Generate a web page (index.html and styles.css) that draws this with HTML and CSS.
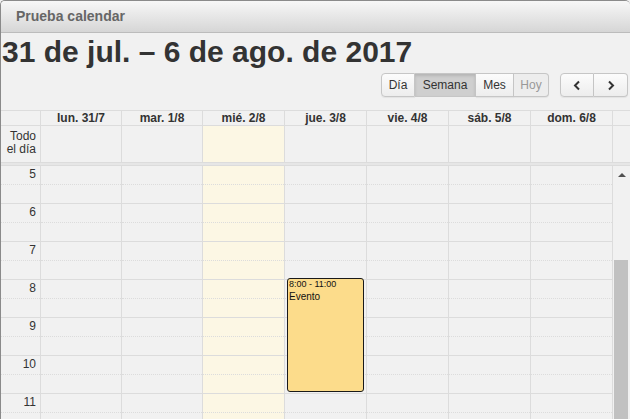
FILE: index.html
```html
<!DOCTYPE html>
<html lang="es">
<head>
<meta charset="utf-8">
<title>Prueba calendar</title>
<link rel="stylesheet" href="styles.css">
</head>
<body>
<div class="window">
  <div class="titlebar">Prueba calendar</div>
  <div class="cal">
    <h2 class="range">31 de jul. – 6 de ago. de 2017</h2>
    <div class="toolbar">
      <div class="btn-group">
        <button class="btn b-dia">Día</button>
        <button class="btn b-sem active">Semana</button>
        <button class="btn b-mes">Mes</button>
        <button class="btn b-hoy disabled">Hoy</button>
      </div>
      <div class="btn-group">
        <button class="btn b-nav"><svg width="8" height="11" viewBox="0 0 8 11"><polyline points="6,1.5 2,5.5 6,9.5" fill="none" stroke="#333" stroke-width="2"/></svg></button>
        <button class="btn b-nav"><svg width="8" height="11" viewBox="0 0 8 11"><polyline points="2,1.5 6,5.5 2,9.5" fill="none" stroke="#333" stroke-width="2"/></svg></button>
      </div>
    </div>

    <div class="row head">
      <div class="cell axis"></div>
      <div class="cell day">lun. 31/7</div>
      <div class="cell day">mar. 1/8</div>
      <div class="cell day">mié. 2/8</div>
      <div class="cell day">jue. 3/8</div>
      <div class="cell day">vie. 4/8</div>
      <div class="cell day">sáb. 5/8</div>
      <div class="cell day">dom. 6/8</div>
      <div class="cell gutter"></div>
    </div>

    <div class="row allday">
      <div class="cell axis"><span>Todo<br>el día</span></div>
      <div class="cell day"></div>
      <div class="cell day"></div>
      <div class="cell day today"></div>
      <div class="cell day"></div>
      <div class="cell day"></div>
      <div class="cell day"></div>
      <div class="cell day"></div>
      <div class="cell gutter"></div>
    </div>

    <div class="divider"></div>

    <div class="row body">
      <div class="col axis">
        <div class="slot"><span>5</span></div><div class="slot"></div>
        <div class="slot"><span>6</span></div><div class="slot"></div>
        <div class="slot"><span>7</span></div><div class="slot"></div>
        <div class="slot"><span>8</span></div><div class="slot"></div>
        <div class="slot"><span>9</span></div><div class="slot"></div>
        <div class="slot"><span>10</span></div><div class="slot"></div>
        <div class="slot"><span>11</span></div><div class="slot"></div>
      </div>
      <div class="col day"><div class="slot"></div><div class="slot"></div><div class="slot"></div><div class="slot"></div><div class="slot"></div><div class="slot"></div><div class="slot"></div><div class="slot"></div><div class="slot"></div><div class="slot"></div><div class="slot"></div><div class="slot"></div><div class="slot"></div><div class="slot"></div></div>
      <div class="col day"><div class="slot"></div><div class="slot"></div><div class="slot"></div><div class="slot"></div><div class="slot"></div><div class="slot"></div><div class="slot"></div><div class="slot"></div><div class="slot"></div><div class="slot"></div><div class="slot"></div><div class="slot"></div><div class="slot"></div><div class="slot"></div></div>
      <div class="col day today"><div class="slot"></div><div class="slot"></div><div class="slot"></div><div class="slot"></div><div class="slot"></div><div class="slot"></div><div class="slot"></div><div class="slot"></div><div class="slot"></div><div class="slot"></div><div class="slot"></div><div class="slot"></div><div class="slot"></div><div class="slot"></div></div>
      <div class="col day has-event"><div class="slot"></div><div class="slot"></div><div class="slot"></div><div class="slot"></div><div class="slot"></div><div class="slot"></div><div class="slot"></div><div class="slot"></div><div class="slot"></div><div class="slot"></div><div class="slot"></div><div class="slot"></div><div class="slot"></div><div class="slot"></div>
        <div class="event">
          <div class="ev-time">8:00 - 11:00</div>
          <div class="ev-title">Evento</div>
        </div>
      </div>
      <div class="col day"><div class="slot"></div><div class="slot"></div><div class="slot"></div><div class="slot"></div><div class="slot"></div><div class="slot"></div><div class="slot"></div><div class="slot"></div><div class="slot"></div><div class="slot"></div><div class="slot"></div><div class="slot"></div><div class="slot"></div><div class="slot"></div></div>
      <div class="col day"><div class="slot"></div><div class="slot"></div><div class="slot"></div><div class="slot"></div><div class="slot"></div><div class="slot"></div><div class="slot"></div><div class="slot"></div><div class="slot"></div><div class="slot"></div><div class="slot"></div><div class="slot"></div><div class="slot"></div><div class="slot"></div></div>
      <div class="col day"><div class="slot"></div><div class="slot"></div><div class="slot"></div><div class="slot"></div><div class="slot"></div><div class="slot"></div><div class="slot"></div><div class="slot"></div><div class="slot"></div><div class="slot"></div><div class="slot"></div><div class="slot"></div><div class="slot"></div><div class="slot"></div></div>
      <div class="col scroll">
        <div class="arrow"></div>
        <div class="thumb"></div>
      </div>
    </div>
  </div>
</div>
</body>
</html>
```
FILE: styles.css
```css
* { box-sizing: border-box; }
html, body { margin: 0; height: 100%; }
body {
  background: #f1f1f1;
  font-family: "Liberation Sans", Arial, sans-serif;
  color: #333;
  overflow: hidden;
}
.window {
  height: 419px;
  border-top: 1px solid #8a8a8a;
  border-left: 1px solid #8a8a8a;
  border-radius: 5px 5px 0 0;
  background: #f1f1f1;
  overflow: hidden;
}
.titlebar {
  height: 32px;
  border-bottom: 1px solid #bcbcbc;
  background: linear-gradient(#f7f7f7, #d6d6d6);
  padding-left: 15px;
  font: bold 14px/31px "Liberation Sans", Arial, sans-serif;
  color: #666;
}
.range {
  margin: 3px 0 5px 1px;
  font: bold 30px/32px "Liberation Sans", Arial, sans-serif;
  color: #333;
  white-space: nowrap;
}
.toolbar {
  display: flex;
  justify-content: flex-end;
  gap: 11px;
  height: 24px;
  padding-right: 2px;
  margin-bottom: 13px;
}
.btn-group { display: flex; }
.btn {
  height: 24px;
  padding: 0;
  border: 1px solid #c6c6c6;
  border-left-width: 0;
  background: linear-gradient(#fcfcfc, #ededed);
  font: 12px "Liberation Sans", Arial, sans-serif;
  color: #333;
  box-shadow: 0 1px 1px rgba(0,0,0,0.06);
}
.btn:first-child { border-left-width: 1px; border-radius: 4px 0 0 4px; }
.btn:last-child { border-radius: 0 4px 4px 0; }
.btn.active {
  background: #cfcfcf;
  box-shadow: inset 0 2px 3px rgba(0,0,0,0.12);
}
.btn.disabled { color: #999; background: #ededed; }
.b-dia { width: 34px; }
.b-sem { width: 61px; }
.b-mes { width: 38px; }
.b-hoy { width: 35px; }
.b-nav { width: 34px; display: flex; align-items: center; justify-content: center; }

.row {
  display: grid;
  grid-template-columns: 40px 81px 81px 82px 82px 82px 82px 82px 17px;
}
.cell { border-right: 1px solid #dcdcdc; }
.cell.gutter { border-right: none; }
.head {
  height: 16px;
  border-top: 1px solid #dcdcdc;
  border-bottom: 1px solid #dcdcdc;
}
.head .day {
  text-align: center;
  font: bold 12px/14px "Liberation Sans", Arial, sans-serif;
  color: #333;
}
.allday {
  height: 37px;
  border-bottom: 1px solid #dcdcdc;
}
.allday .axis {
  text-align: right;
  padding: 4px 4px 0 0;
  font: 12px/13px "Liberation Sans", Arial, sans-serif;
  color: #333;
}
.today { background: #fcf7e4; }
.divider {
  height: 2px;
  background: #e6e6e6;
}
.body {
  height: 254px;
  border-top: 1px solid #dcdcdc;
  overflow: hidden;
}
.col { display: flex; flex-direction: column; }
.col.day { border-right: 1px solid #dcdcdc; }
.has-event { position: relative; }
.slot {
  height: 19px;
  flex: none;
  border-bottom: 1px solid #dcdcdc;
}
.slot:nth-child(odd) { border-bottom-style: dotted; }
.axis .slot {
  text-align: right;
  padding-right: 4px;
  font: 12px/17px "Liberation Sans", Arial, sans-serif;
  color: #333;
}
.col.axis { border-right: 1px solid #dcdcdc; }
.event {
  position: absolute;
  top: 112px;
  left: 2px;
  right: 2px;
  height: 114px;
  background: #fcdc8b;
  border: 1px solid #1a1a1a;
  border-radius: 3px;
  padding: 0 1px;
  color: #111;
}
.ev-time { font: 9px/9px "Liberation Sans", Arial, sans-serif; margin-top: 1px; }
.ev-title { font: 10px/13px "Liberation Sans", Arial, sans-serif; margin-top: 1px; }
.scroll { align-items: stretch; }
.arrow {
  width: 0;
  height: 0;
  margin: 7px auto 0;
  border-left: 4px solid transparent;
  border-right: 4px solid transparent;
  border-bottom: 4px solid #505050;
}
.thumb {
  margin: 83px 2px 0 1px;
  height: 200px;
  background: #c1c1c1;
}
```
